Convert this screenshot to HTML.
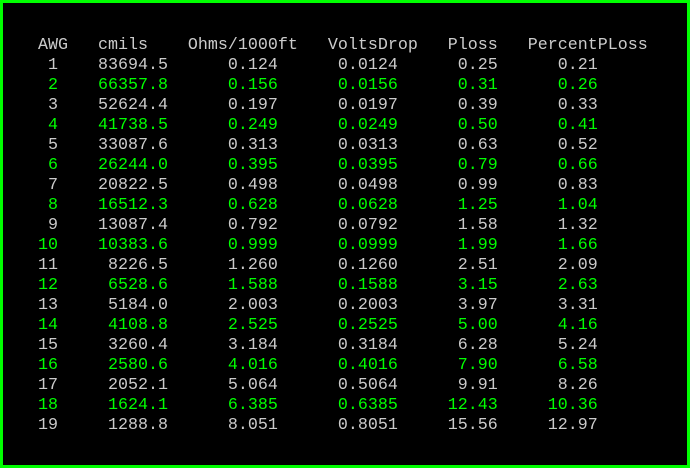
<!DOCTYPE html>
<html><head><meta charset="utf-8"><style>
html,body{margin:0;padding:0;background:#000;}
.box{position:absolute;left:0;top:0;width:690px;height:468px;box-sizing:border-box;border:3px solid #00ff00;background:#000;}
pre{position:absolute;left:38px;top:36px;margin:0;font-family:"Liberation Mono","DejaVu Sans Mono",monospace;font-size:16.67px;line-height:20px;color:#cbcbcb;}
.g{color:#00ff00;}
</style></head><body><div class="box"></div>
<pre>AWG   cmils    Ohms/1000ft   VoltsDrop   Ploss   PercentPLoss
 1    83694.5      0.124      0.0124      0.25      0.21
<span class="g"> 2    66357.8      0.156      0.0156      0.31      0.26</span>
 3    52624.4      0.197      0.0197      0.39      0.33
<span class="g"> 4    41738.5      0.249      0.0249      0.50      0.41</span>
 5    33087.6      0.313      0.0313      0.63      0.52
<span class="g"> 6    26244.0      0.395      0.0395      0.79      0.66</span>
 7    20822.5      0.498      0.0498      0.99      0.83
<span class="g"> 8    16512.3      0.628      0.0628      1.25      1.04</span>
 9    13087.4      0.792      0.0792      1.58      1.32
<span class="g">10    10383.6      0.999      0.0999      1.99      1.66</span>
11     8226.5      1.260      0.1260      2.51      2.09
<span class="g">12     6528.6      1.588      0.1588      3.15      2.63</span>
13     5184.0      2.003      0.2003      3.97      3.31
<span class="g">14     4108.8      2.525      0.2525      5.00      4.16</span>
15     3260.4      3.184      0.3184      6.28      5.24
<span class="g">16     2580.6      4.016      0.4016      7.90      6.58</span>
17     2052.1      5.064      0.5064      9.91      8.26
<span class="g">18     1624.1      6.385      0.6385     12.43     10.36</span>
19     1288.8      8.051      0.8051     15.56     12.97</pre>
</body></html>
